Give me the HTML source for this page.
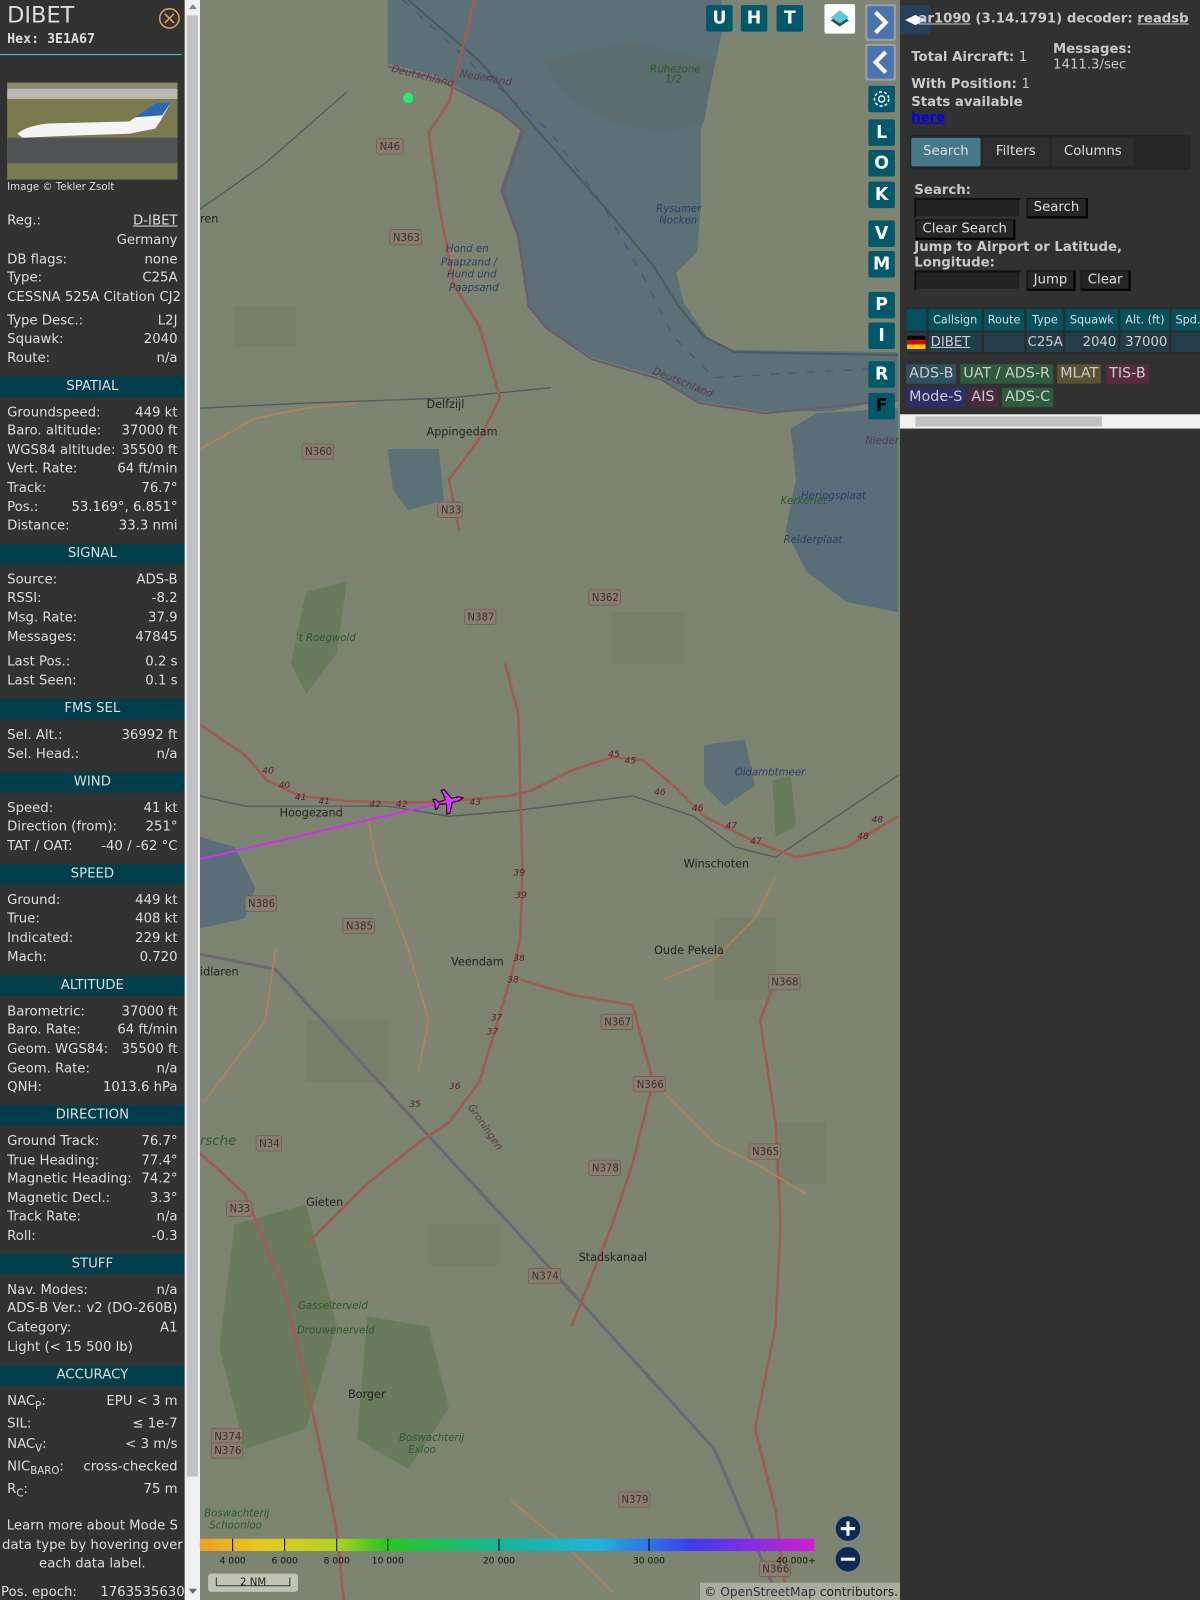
<!DOCTYPE html>
<html><head><meta charset="utf-8"><style>
*{margin:0;padding:0;box-sizing:border-box}
body{width:1200px;height:1600px;overflow:hidden;background:#7d8472;font-family:"DejaVu Sans","Liberation Sans",sans-serif;position:relative}
#wrap{position:absolute;left:0;top:0;width:1176px;height:1568px;transform:scale(1.020408);transform-origin:0 0;overflow:hidden}
#side{position:absolute;left:0;top:0;width:181px;height:1600px;background:#323232;color:#ddd;font-size:13px}
.r{position:absolute;left:7px;width:167px;display:flex;justify-content:space-between;line-height:16px;white-space:nowrap}
.h{position:absolute;left:0;width:181px;height:20px;background:#013e4c;text-align:center;line-height:20px;color:#ddd}
#sb{position:absolute;left:181px;top:0;width:15px;height:1568px;background:#f0f0f0}
#rp{position:absolute;left:882px;top:0;width:318px;height:1600px;background:#313131;color:#c8c8c8;font-size:13px}
.mb{position:absolute;width:26px;height:26px;background:#00596b;color:#fff;font-weight:bold;font-size:17px;text-align:center;line-height:26px;border-radius:2px}
.btn{position:absolute;background:#262626;color:#ddd;border:1px solid #111;border-right:2px solid #000;border-bottom:2px solid #000;font-size:13px;line-height:17px;padding:0 6px}
.inp{position:absolute;background:#222;border:2px solid #111;border-right-color:#333;border-bottom-color:#333}
.th{position:absolute;top:303px;height:21px;background:#04515e;color:#ddd;font-size:11px;line-height:21px;text-align:center}
.td{position:absolute;top:326px;height:19px;background:#243e48;color:#ccc;font-size:13px;line-height:19px}
.bd{position:absolute;height:19px;font-size:14px;line-height:19px;padding:0 3px;color:#ccc}
</style></head><body><div id="wrap">

<svg style="position:absolute;left:196px;top:0" width="686" height="1600" viewBox="196 0 686 1600">
<rect x="196" y="0" width="686" height="1600" fill="#7d8472"/>
<g fill="#778069" opacity=".8">
<rect x="230" y="300" width="60" height="40"/><rect x="600" y="600" width="70" height="50"/><rect x="300" y="1000" width="80" height="60"/>
<rect x="700" y="900" width="60" height="80"/><rect x="420" y="1200" width="70" height="40"/><rect x="760" y="1100" width="50" height="60"/>
</g>
<g fill="#6a7a5c">
<path d="M300 580 L340 570 L330 640 L300 680 L285 650Z"/>
<path d="M230 1200 L300 1180 L330 1300 L300 1400 L240 1420 L215 1320Z"/>
<path d="M360 1290 L420 1300 L440 1380 L400 1440 L350 1410Z"/>
<path d="M757 765 L775 760 L780 810 L760 820Z"/>
</g>
<path fill="#5c7078" d="M380 0 L707 0 L710 20 L687 127 L687 200 L683 247 L663 267 L670 297 L693 330 L713 343 L880 345 L880 390 L813 403 L747 403 L683 393 L647 370 L580 350 L533 320 L517 300 L507 233 L490 187 L510 127 L490 110 L430 75 L380 62Z"/>
<path fill="#5a6d78" d="M880 400 L800 405 L775 420 L780 470 L770 520 L790 560 L830 590 L880 600Z"/>
<path fill="#5d6c6e" d="M530 60 L620 40 L700 60 L690 120 L650 130 L600 120 L560 100Z"/>
<path fill="#5a6d78" d="M196 820 L230 830 L250 870 L240 900 L196 910Z"/>
<path fill="#5c7078" d="M380 440 L430 440 L435 490 L400 500 L385 480Z"/>
<path fill="#5c7078" d="M690 730 L730 725 L740 770 L710 790 L690 770Z"/>
<g stroke="#3f5a78" stroke-width="1.2" fill="none" stroke-dasharray="8 10">
<path d="M395 0 L470 70 L540 130 L590 200 L630 270 L660 330 L700 370 L880 360"/>
</g>
<path d="M380 65 L430 78 L490 110 L512 128 L492 187 L508 232 L518 300 L536 322 L580 352 L648 372 L685 395 L750 405 L880 392" stroke="#6d5a6b" stroke-width="2" fill="none"/>
<path d="M400 0 L470 60 L520 120 L590 200 L640 260 L665 300 L690 330 L720 345 L880 348" stroke="#4c5a5a" stroke-width="2" fill="none"/>
<g stroke="#555a60" stroke-width="1.3" fill="none">
<path d="M196 780 L240 790 L380 790 L440 800 L500 795 L620 780 L680 800 L720 830 L760 840 L880 760"/>
<path d="M196 400 L300 395 L440 390 L540 380"/>
<path d="M196 205 L260 160 L340 90"/>
</g>
<path d="M196 935 L270 950 L500 1200 L700 1420 L760 1560" stroke="#6f6874" stroke-width="3" fill="none"/>
<g stroke="#a25a52" stroke-width="2.5" fill="none">
<path d="M196 710 L240 740 L262 765 L294 780 L340 785 L395 787 L440 785 L500 780 L520 775 L560 755 L600 742 L630 745 L660 770 L690 800 L740 825 L780 840 L830 830 L880 800"/>
<path d="M495 650 L508 700 L510 780 L512 850 L510 920 L500 960 L485 1010 L470 1060 L440 1100 L410 1120 L360 1160 L300 1220"/>
<path d="M465 0 L440 100 L420 130 L430 200 L445 280 L470 320 L490 390 L470 430 L440 470 L450 520"/>
<path d="M510 960 L560 975 L620 985 L640 1060 L620 1140 L600 1200 L560 1300"/>
<path d="M770 1560 L760 1480 L740 1400 L760 1300 L765 1200 L760 1100 L745 1000 L760 960"/>
<path d="M196 1130 L240 1170 L280 1270 L310 1400 L330 1500 L340 1600"/>
</g>
<g stroke="#b0825a" stroke-width="1.6" fill="none">
<path d="M360 800 L370 850 L400 930 L420 1000 L410 1050"/>
<path d="M196 440 L250 410 L300 400 L350 395"/>
<path d="M640 1060 L700 1120 L740 1140 L790 1170"/>
<path d="M650 960 L700 940 L740 900 L760 860"/>
<path d="M200 1080 L260 1000 L270 930"/>
<path d="M500 1470 L560 1520 L600 1560"/>
</g>
<line x1="196" y1="842" x2="440" y2="785" stroke="#cc33ee" stroke-width="2"/>
<g transform="translate(440,785) rotate(77)" fill="#dd33ff" stroke="#000" stroke-width="1">
<path d="M0 -14 L2 -10 L2 -3 L12 2 L12 5 L2 3 L1 10 L5 13 L5 15 L0 14 L-5 15 L-5 13 L-1 10 L-2 3 L-12 5 L-12 2 L-2 -3 L-2 -10Z"/>
</g>
<circle cx="400" cy="96" r="5" fill="#22ee77"/>
<g font-family="DejaVu Sans, sans-serif" font-size="10" fill="#333">
<g fill="#8c7c70" stroke="#6a5a50" stroke-width=".7">
<rect x="369" y="136" width="26" height="15" rx="2"/><rect x="382" y="225" width="31" height="15" rx="2"/><rect x="296" y="435" width="31" height="15" rx="2"/>
<rect x="429" y="492" width="24" height="15" rx="2"/><rect x="455" y="597" width="31" height="15" rx="2"/><rect x="577" y="578" width="31" height="15" rx="2"/>
<rect x="240" y="878" width="31" height="15" rx="2"/><rect x="336" y="900" width="31" height="15" rx="2"/><rect x="589" y="994" width="31" height="15" rx="2"/>
<rect x="753" y="955" width="31" height="15" rx="2"/><rect x="621" y="1055" width="31" height="15" rx="2"/><rect x="734" y="1121" width="31" height="15" rx="2"/>
<rect x="577" y="1137" width="31" height="15" rx="2"/><rect x="251" y="1113" width="25" height="15" rx="2"/><rect x="518" y="1243" width="31" height="15" rx="2"/>
<rect x="222" y="1177" width="25" height="15" rx="2"/><rect x="606" y="1462" width="31" height="15" rx="2"/><rect x="207" y="1400" width="31" height="15" rx="2"/>
<rect x="207" y="1414" width="31" height="15" rx="2"/><rect x="744" y="1530" width="31" height="15" rx="2"/><rect x="293" y="1584" width="31" height="15" rx="2"/>
<rect x="398" y="1584" width="25" height="15" rx="2"/><rect x="656" y="1577" width="31" height="15" rx="2"/>
</g>
<text x="372" y="147">N46</text><text x="385" y="236">N363</text><text x="299" y="446">N360</text><text x="432" y="503">N33</text>
<text x="458" y="608">N387</text><text x="580" y="589">N362</text><text x="243" y="889">N386</text><text x="339" y="911">N385</text>
<text x="592" y="1005">N367</text><text x="756" y="966">N368</text><text x="624" y="1066">N366</text><text x="737" y="1132">N365</text>
<text x="580" y="1148">N378</text><text x="254" y="1124">N34</text><text x="521" y="1254">N374</text><text x="225" y="1188">N33</text>
<text x="609" y="1473">N379</text><text x="210" y="1411">N374</text><text x="210" y="1425">N376</text><text x="747" y="1541">N366</text>
<text x="296" y="1595">N376</text><text x="401" y="1595">N34</text><text x="659" y="1588">N391</text>
</g>
<g font-family="DejaVu Sans, sans-serif" font-size="11" fill="#222">
<text x="418" y="400">Delfzijl</text><text x="418" y="427">Appingedam</text><text x="274" y="800">Hoogezand</text>
<text x="442" y="946">Veendam</text><text x="641" y="935">Oude Pekela</text><text x="670" y="850">Winschoten</text>
<text x="300" y="1182">Gieten</text><text x="567" y="1236">Stadskanaal</text><text x="341" y="1370">Borger</text><text x="721" y="1518">Ter Apel</text>
<text x="196" y="956">idlaren</text><text x="196" y="218">ren</text>
</g>
<g font-family="DejaVu Sans, sans-serif" font-size="10" fill="#2b3f66" font-style="italic">
<text x="437" y="247">Hond en</text><text x="432" y="260">Paapzand /</text><text x="438" y="272">Hund und</text><text x="440" y="285">Paapsand</text>
<text x="643" y="208">Rysumer</text><text x="646" y="219">Nocken</text><text x="720" y="760">Oldambtmeer</text>
<text x="785" y="489">Heringsplaat</text><text x="768" y="532">Reiderplaat</text>
</g>
<g font-family="DejaVu Sans, sans-serif" font-size="10" fill="#2c5a2c" font-style="italic">
<text x="637" y="71">Ruhezone</text><text x="652" y="81">1/2</text><text x="765" y="494">Kerkeriet</text>
<text x="290" y="628">'t Roegwold</text><text x="292" y="1283">Gasselterveld</text><text x="291" y="1307">Drouwenerveld</text>
<text x="391" y="1412">Boswachterij</text><text x="400" y="1424">Exloo</text><text x="200" y="1486">Boswachterij</text><text x="205" y="1498">Schoonloo</text>
<text x="196" y="1122" font-size="13">rsche</text>
</g>
<g font-family="DejaVu Sans, sans-serif" font-size="10" fill="#5a3a4a" font-style="italic">
<text x="383" y="70" transform="rotate(14 383 70)">Deutschland</text><text x="450" y="75" transform="rotate(10 450 75)">Nederland</text>
<text x="639" y="366" transform="rotate(22 639 366)">Deutschland</text><text x="458" y="1085" transform="rotate(55 458 1085)">Groningen</text>
<text x="848" y="435">Nieders</text>
</g>
<g font-family="DejaVu Sans, sans-serif" font-size="9" fill="#5a2030" font-style="italic">
<text x="257" y="758">40</text><text x="273" y="772">40</text><text x="289" y="784">41</text><text x="312" y="788">41</text>
<text x="362" y="791">42</text><text x="388" y="791">42</text><text x="460" y="789">43</text><text x="596" y="742">45</text><text x="612" y="748">45</text>
<text x="641" y="779">46</text><text x="678" y="795">46</text><text x="711" y="812">47</text><text x="735" y="827">47</text><text x="840" y="822">48</text><text x="854" y="806">48</text>
<text x="503" y="858">39</text><text x="505" y="880">39</text><text x="503" y="942">38</text><text x="497" y="963">38</text>
<text x="481" y="1000">37</text><text x="477" y="1014">37</text><text x="440" y="1067">36</text><text x="401" y="1085">35</text>
</g>
<defs><linearGradient id="cg" x1="0" x2="1">
<stop offset="0" stop-color="#f0a020"/><stop offset=".1" stop-color="#e6c81e"/><stop offset=".22" stop-color="#b4d21e"/><stop offset=".3" stop-color="#28c81e"/><stop offset=".5" stop-color="#14b4a0"/><stop offset=".65" stop-color="#1eb4dc"/><stop offset=".8" stop-color="#3c3cf0"/><stop offset="1" stop-color="#d21ed2"/>
</linearGradient></defs>
<rect x="196" y="1508" width="602" height="12" fill="url(#cg)"/>
<g stroke="#000" stroke-width="1"><line x1="228" y1="1508" x2="228" y2="1520"/><line x1="279" y1="1508" x2="279" y2="1520"/><line x1="330" y1="1508" x2="330" y2="1520"/><line x1="380" y1="1508" x2="380" y2="1520"/><line x1="489" y1="1508" x2="489" y2="1520"/><line x1="636" y1="1508" x2="636" y2="1520"/></g>
<g font-family="DejaVu Sans, sans-serif" font-size="9" fill="#111" text-anchor="middle">
<text x="228" y="1532">4 000</text><text x="279" y="1532">6 000</text><text x="330" y="1532">8 000</text><text x="380" y="1532">10 000</text><text x="489" y="1532">20 000</text><text x="636" y="1532">30 000</text><text x="780" y="1532">40 000+</text>
</g>
<circle cx="831" cy="1498" r="12" fill="#0a2a5a"/><path d="M824 1498 H838 M831 1491 V1505" stroke="#fff" stroke-width="3"/>
<circle cx="831" cy="1528" r="12" fill="#0a2a5a"/><path d="M824 1528 H838" stroke="#fff" stroke-width="3"/>
<rect x="204" y="1542" width="88" height="18" rx="3" fill="#c8cabc" opacity=".9"/>
<path d="M212 1546 V1554 H284 V1546" stroke="#333" fill="none"/>
<text x="248" y="1554" font-family="DejaVu Sans, sans-serif" font-size="10" fill="#222" text-anchor="middle">2 NM</text>
<rect x="686" y="1551" width="196" height="49" fill="#a9ac9f"/>
<text x="690" y="1564" font-family="DejaVu Sans, sans-serif" font-size="12" fill="#222">© <tspan fill="#334">OpenStreetMap</tspan> contributors.</text>
</svg>

<div class="mb" style="left:692px;top:5px">U</div>
<div class="mb" style="left:726px;top:5px">H</div>
<div class="mb" style="left:761px;top:5px">T</div>
<div style="position:absolute;left:808px;top:4px;width:30px;height:29px;background:#fff;border-radius:2px">
<svg width="30" height="29"><path d="M6 16 L15 22 L24 16 L15 10Z" fill="#2a4a55"/><path d="M6 13 L15 19 L24 13 L15 6Z" fill="#5cc8d6"/></svg></div>
<div style="position:absolute;left:848px;top:4px;width:30px;height:36px;background:#9aa0a0;border-radius:2px"><div style="margin:2px;width:26px;height:32px;background:#4a74b0;border-radius:2px"><svg width="26" height="32"><path d="M8 6 L18 16 L8 26" stroke="#fff" stroke-width="4" fill="none"/></svg></div></div>
<div style="position:absolute;left:848px;top:43px;width:30px;height:36px;background:#9aa0a0;border-radius:2px"><div style="margin:2px;width:26px;height:32px;background:#4a74b0;border-radius:2px"><svg width="26" height="32"><path d="M18 6 L8 16 L18 26" stroke="#fff" stroke-width="4" fill="none"/></svg></div></div>
<div class="mb" style="left:851px;top:84px"><svg width="26" height="26"><circle cx="13" cy="13" r="7" stroke="#fff" stroke-width="1.5" fill="none" stroke-dasharray="3 2"/><circle cx="13" cy="13" r="3" stroke="#fff" stroke-width="1.3" fill="none"/></svg></div>
<div class="mb" style="left:851px;top:117px">L</div>
<div class="mb" style="left:851px;top:147px">O</div>
<div class="mb" style="left:851px;top:178px">K</div>
<div class="mb" style="left:851px;top:216px">V</div>
<div class="mb" style="left:851px;top:246px">M</div>
<div class="mb" style="left:851px;top:286px">P</div>
<div class="mb" style="left:851px;top:316px">I</div>
<div class="mb" style="left:851px;top:354px">R</div>
<div class="mb" style="left:851px;top:385px;color:#000">F</div>

<div id="side">
<div style="position:absolute;left:7px;top:3px;font-size:22px;color:#ddd">DIBET</div>
<div style="position:absolute;left:7px;top:31px;font-family:'DejaVu Sans Mono','Liberation Mono',monospace;font-weight:bold;font-size:13px">Hex: 3E1A67</div>
<svg style="position:absolute;left:155px;top:7px" width="22" height="22"><circle cx="11" cy="11" r="9.5" stroke="#d8a060" stroke-width="1.5" fill="none"/><path d="M6.5 6.5 L15.5 15.5 M15.5 6.5 L6.5 15.5" stroke="#d8a060" stroke-width="1.5"/></svg>
<div style="position:absolute;left:0;top:53px;width:178px;height:1px;background:#5bc0cc"></div>
<div style="position:absolute;left:7px;top:81px;width:167px;height:95px;background:#7a7a50;overflow:hidden">
<div style="position:absolute;top:0;width:167px;height:6px;background:#8a8a6a"></div>
<div style="position:absolute;top:6px;width:167px;height:10px;background:#b8b8b0"></div>
<div style="position:absolute;top:54px;width:167px;height:25px;background:#505454"></div>
<svg style="position:absolute;left:0;top:0" width="167" height="95"><path d="M10 50 Q20 42 40 40 L120 38 L145 20 L160 20 L150 38 L145 45 L120 50 L60 52 L15 54Z" fill="#f4f4f4"/><path d="M125 34 L145 20 L160 20 L152 32Z" fill="#2a6ab0"/></svg>
</div>
<div style="position:absolute;left:7px;top:178px;font-size:10px">Image © Tekler Zsolt</div>
<div class="r" style="top:209px"><span>Reg.:</span><span style="text-decoration:underline">D-IBET</span></div>
<div class="r" style="top:228px"><span></span><span>Germany</span></div>
<div class="r" style="top:247px"><span>DB flags:</span><span>none</span></div>
<div class="r" style="top:265px"><span>Type:</span><span>C25A</span></div>
<div class="r" style="top:284px"><span>CESSNA 525A Citation CJ2</span></div>
<div class="r" style="top:307px"><span>Type Desc.:</span><span>L2J</span></div>
<div class="r" style="top:325px"><span>Squawk:</span><span>2040</span></div>
<div class="r" style="top:344px"><span>Route:</span><span>n/a</span></div>
<div class="h" style="top:369px">SPATIAL</div>
<div class="r" style="top:397px"><span>Groundspeed:</span><span>449 kt</span></div>
<div class="r" style="top:415px"><span>Baro. altitude:</span><span>37000 ft</span></div>
<div class="r" style="top:434px"><span>WGS84 altitude:</span><span>35500 ft</span></div>
<div class="r" style="top:452px"><span>Vert. Rate:</span><span>64 ft/min</span></div>
<div class="r" style="top:471px"><span>Track:</span><span>76.7°</span></div>
<div class="r" style="top:490px"><span>Pos.:</span><span>53.169°, 6.851°</span></div>
<div class="r" style="top:508px"><span>Distance:</span><span>33.3 nmi</span></div>
<div class="h" style="top:533px">SIGNAL</div>
<div class="r" style="top:561px"><span>Source:</span><span>ADS-B</span></div>
<div class="r" style="top:579px"><span>RSSI:</span><span>-8.2</span></div>
<div class="r" style="top:598px"><span>Msg. Rate:</span><span>37.9</span></div>
<div class="r" style="top:617px"><span>Messages:</span><span>47845</span></div>
<div class="r" style="top:641px"><span>Last Pos.:</span><span>0.2 s</span></div>
<div class="r" style="top:660px"><span>Last Seen:</span><span>0.1 s</span></div>
<div class="h" style="top:685px">FMS SEL</div>
<div class="r" style="top:713px"><span>Sel. Alt.:</span><span>36992 ft</span></div>
<div class="r" style="top:732px"><span>Sel. Head.:</span><span>n/a</span></div>
<div class="h" style="top:757px">WIND</div>
<div class="r" style="top:785px"><span>Speed:</span><span>41 kt</span></div>
<div class="r" style="top:803px"><span>Direction (from):</span><span>251°</span></div>
<div class="r" style="top:822px"><span>TAT / OAT:</span><span>-40 / -62 °C</span></div>
<div class="h" style="top:847px">SPEED</div>
<div class="r" style="top:875px"><span>Ground:</span><span>449 kt</span></div>
<div class="r" style="top:893px"><span>True:</span><span>408 kt</span></div>
<div class="r" style="top:912px"><span>Indicated:</span><span>229 kt</span></div>
<div class="r" style="top:931px"><span>Mach:</span><span>0.720</span></div>
<div class="h" style="top:956px">ALTITUDE</div>
<div class="r" style="top:984px"><span>Barometric:</span><span>37000 ft</span></div>
<div class="r" style="top:1002px"><span>Baro. Rate:</span><span>64 ft/min</span></div>
<div class="r" style="top:1021px"><span>Geom. WGS84:</span><span>35500 ft</span></div>
<div class="r" style="top:1040px"><span>Geom. Rate:</span><span>n/a</span></div>
<div class="r" style="top:1058px"><span>QNH:</span><span>1013.6 hPa</span></div>
<div class="h" style="top:1083px">DIRECTION</div>
<div class="r" style="top:1111px"><span>Ground Track:</span><span>76.7°</span></div>
<div class="r" style="top:1130px"><span>True Heading:</span><span>77.4°</span></div>
<div class="r" style="top:1148px"><span>Magnetic Heading:</span><span>74.2°</span></div>
<div class="r" style="top:1167px"><span>Magnetic Decl.:</span><span>3.3°</span></div>
<div class="r" style="top:1185px"><span>Track Rate:</span><span>n/a</span></div>
<div class="r" style="top:1204px"><span>Roll:</span><span>-0.3</span></div>
<div class="h" style="top:1229px">STUFF</div>
<div class="r" style="top:1257px"><span>Nav. Modes:</span><span>n/a</span></div>
<div class="r" style="top:1275px"><span>ADS-B Ver.:</span><span>v2 (DO-260B)</span></div>
<div class="r" style="top:1294px"><span>Category:</span><span>A1</span></div>
<div class="r" style="top:1313px"><span>Light (&lt; 15 500 lb)</span></div>
<div class="h" style="top:1338px">ACCURACY</div>
<div class="r" style="top:1366px"><span>NAC<sub style="font-size:10px">P</sub>:</span><span>EPU &lt; 3 m</span></div>
<div class="r" style="top:1388px"><span>SIL:</span><span>≤ 1e-7</span></div>
<div class="r" style="top:1408px"><span>NAC<sub style="font-size:10px">V</sub>:</span><span>&lt; 3 m/s</span></div>
<div class="r" style="top:1430px"><span>NIC<sub style="font-size:10px">BARO</sub>:</span><span>cross-checked</span></div>
<div class="r" style="top:1452px"><span>R<sub style="font-size:10px">C</sub>:</span><span>75 m</span></div>
<div style="position:absolute;left:0;top:1487px;width:181px;text-align:center;line-height:18.5px">Learn more about Mode S data type by hovering over each data label.</div>
<div class="r" style="top:1553px;left:1px;width:180px"><span>Pos. epoch:</span><span>1763535630</span></div>
</div>
<div id="sb"><div style="position:absolute;left:2px;top:15px;width:11px;height:1432px;background:#c1c1c1"></div>
<div style="position:absolute;left:4px;top:4px;border:4px solid transparent;border-bottom:5px solid #888;border-top:0"></div>
<div style="position:absolute;left:4px;top:1557px;border:4px solid transparent;border-top:5px solid #666;border-bottom:0"></div></div>

<div id="rp">
<div style="position:absolute;left:0;top:5px;width:30px;height:29px;background:#24405a;border-radius:2px;color:#fff;font-size:13px;text-align:center;line-height:29px">◀▶</div>
<div style="position:absolute;left:18px;top:11px;font-weight:bold;font-size:13px;white-space:nowrap"><u>ar1090</u> (3.14.1791) decoder: <u>readsb</u></div>
<div style="position:absolute;left:11px;top:49px;font-weight:bold">Total Aircraft: <span style="font-weight:normal">1</span></div>
<div style="position:absolute;left:150px;top:41px;font-weight:bold">Messages:</div>
<div style="position:absolute;left:150px;top:56px">1411.3/sec</div>
<div style="position:absolute;left:11px;top:75px;font-weight:bold">With Position: <span style="font-weight:normal">1</span></div>
<div style="position:absolute;left:11px;top:93px;font-weight:bold">Stats available</div>
<div style="position:absolute;left:11px;top:108px;font-weight:bold;color:#0000ee;text-decoration:underline">here</div>
<div style="position:absolute;left:10px;top:132px;width:275px;height:34px;background:#262626;border-radius:2px"></div>
<div style="position:absolute;left:11px;top:135px;width:68px;height:28px;background:#467888;color:#ddd;text-align:center;line-height:28px;border-radius:2px">Search</div>
<div style="position:absolute;left:81px;top:135px;width:65px;height:28px;background:#2e2e2e;color:#ddd;text-align:center;line-height:28px;border-radius:2px">Filters</div>
<div style="position:absolute;left:149px;top:135px;width:80px;height:28px;background:#2e2e2e;color:#ddd;text-align:center;line-height:28px;border-radius:2px">Columns</div>
<div style="position:absolute;left:14px;top:179px;font-weight:bold">Search:</div>
<div class="inp" style="left:14px;top:194px;width:105px;height:20px"></div>
<div class="btn" style="left:124px;top:194px">Search</div>
<div class="btn" style="left:15px;top:215px">Clear Search</div>
<div style="position:absolute;left:14px;top:235px;font-weight:bold;line-height:15px">Jump to Airport or Latitude,<br>Longitude:</div>
<div class="inp" style="left:14px;top:265px;width:105px;height:20px"></div>
<div class="btn" style="left:124px;top:265px">Jump</div>
<div class="btn" style="left:177px;top:265px">Clear</div>
<div style="position:absolute;left:6px;top:301px;width:312px;height:46px;background:#2a2a2a"></div>
<div class="th" style="left:6px;width:20px"></div>
<div class="th" style="left:28px;width:52px">Callsign</div>
<div class="th" style="left:82px;width:40px">Route</div>
<div class="th" style="left:124px;width:36px">Type</div>
<div class="th" style="left:162px;width:52px">Squawk</div>
<div class="th" style="left:216px;width:48px">Alt. (ft)</div>
<div class="th" style="left:266px;width:52px;text-align:left;padding-left:4px">Spd.</div>
<div class="td" style="left:6px;width:20px"><div style="margin:3px 1px;width:18px;height:13px;background:linear-gradient(#000 33%,#d00 33% 66%,#fc0 66%)"></div></div>
<div class="td" style="left:28px;width:52px;padding-left:2px;text-decoration:underline">DIBET</div>
<div class="td" style="left:82px;width:40px"></div>
<div class="td" style="left:124px;width:36px;padding-left:1px">C25A</div>
<div class="td" style="left:162px;width:52px;text-align:right;padding-right:2px">2040</div>
<div class="td" style="left:216px;width:48px;text-align:right;padding-right:2px">37000</div>
<div class="td" style="left:266px;width:52px"></div>
<div class="bd" style="left:6px;top:357px;background:#2e5060">ADS-B</div>
<div class="bd" style="left:59px;top:357px;background:#2e5a3e">UAT / ADS-R</div>
<div class="bd" style="left:154px;top:357px;background:#5a5232">MLAT</div>
<div class="bd" style="left:202px;top:357px;background:#5a2a3e">TIS-B</div>
<div class="bd" style="left:6px;top:380px;background:#2e2e66">Mode-S</div>
<div class="bd" style="left:67px;top:380px;background:#4a2a40">AIS</div>
<div class="bd" style="left:100px;top:380px;background:#2e5a3e">ADS-C</div>
<div style="position:absolute;left:0;top:406px;width:294px;height:14px;background:#f0f0f0"><div style="position:absolute;left:15px;top:2px;width:183px;height:10px;background:#c1c1c1"></div></div>
</div>
</div></body></html>
